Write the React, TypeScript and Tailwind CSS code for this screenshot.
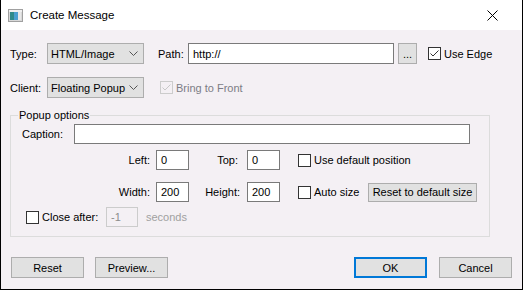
import React from "react";

const font = { fontFamily: '"Liberation Sans", Arial, sans-serif' };

function Check({ checked, disabled }: { checked?: boolean; disabled?: boolean }) {
  return (
    <div
      className={
        "w-[13px] h-[13px] border flex items-center justify-center shrink-0 " +
        (disabled ? "border-[#cccccc] bg-[#f4f0f4]" : "border-[#333333] bg-white")
      }
    >
      {checked && (
        <svg width="11" height="11" viewBox="0 0 11 11">
          <path d="M1.5 5.5 L4 8 L9.5 2.5" fill="none" stroke={disabled ? "#c8c8c8" : "#333333"} strokeWidth="1" />
        </svg>
      )}
    </div>
  );
}

function Select({ value }: { value: string }) {
  return (
    <div className="w-[97px] h-[21px] bg-[#e1e1e1] border border-[#adadad] flex items-center justify-between pl-[3px] pr-[5px] shrink-0">
      <span>{value}</span>
      <svg width="9" height="6" viewBox="0 0 9 6">
        <path d="M0.5 0.5 L4.5 4.5 L8.5 0.5" fill="none" stroke="#555555" strokeWidth="1" />
      </svg>
    </div>
  );
}

function Input({ w, value, disabled }: { w: string; value?: string; disabled?: boolean }) {
  return (
    <div
      className={
        "h-[20px] border flex items-center pl-[4px] shrink-0 " +
        w +
        (disabled ? " border-[#cccccc] bg-[#f4f0f4] text-[#8c8c8c]" : " border-[#7a7a7a] bg-white")
      }
    >
      {value}
    </div>
  );
}

function Button({ label, primary, className = "" }: { label: string; primary?: boolean; className?: string }) {
  return (
    <div
      className={
        "w-[73px] h-[21px] bg-[#e1e1e1] flex items-center justify-center shrink-0 " +
        (primary ? "border-2 border-[#0078d7]" : "border border-[#adadad]") +
        " " +
        className
      }
    >
      {label}
    </div>
  );
}

export default function App() {
  return (
    <div
      className="w-[523px] h-[290px] flex flex-col border-l border-r border-b border-black text-[11px] leading-[14px] whitespace-nowrap text-black bg-[#f4f0f4] overflow-hidden"
      style={font}
    >
      {/* Title bar */}
      <div className="h-[30px] bg-white flex items-center shrink-0">
        <div className="ml-[7px] w-[15px] h-[13px]">
          <svg width="15" height="13" viewBox="0 0 15 13">
            <rect x="0.5" y="0.5" width="14" height="12" fill="#d8d8d8" stroke="#a0a0a0" />
            <rect x="2" y="3" width="4" height="8" fill="#2f8a8a" />
            <rect x="6" y="3" width="4" height="8" fill="#4a9fd0" />
            <rect x="10" y="3" width="3" height="8" fill="#e8e8e8" />
            <rect x="1" y="1" width="13" height="2" fill="#f0f0f0" />
          </svg>
        </div>
        <span className="ml-[7px] text-[11.5px]">Create Message</span>
        <div className="ml-auto mr-[24px]">
          <svg width="11" height="11" viewBox="0 0 11 11">
            <path d="M0.5 0.5 L10.5 10.5 M10.5 0.5 L0.5 10.5" stroke="#000" strokeWidth="1" />
          </svg>
        </div>
      </div>

      {/* Body */}
      <div className="flex flex-col pl-[9px]">
        {/* Row 1 */}
        <div className="flex items-center mt-[13px] h-[21px]">
          <span className="w-[37px]">Type:</span>
          <Select value="HTML/Image" />
          <span className="ml-[14px] w-[30px]">Path:</span>
          <Input w="w-[206px] h-[21px]" value="http://" />
          <div className="ml-[4px] w-[19px] h-[21px] bg-[#e1e1e1] border border-[#adadad] flex items-end justify-center pb-[3px] text-[11px] leading-none shrink-0">
            ...
          </div>
          <div className="ml-[11px] flex items-center">
            <Check checked />
            <span className="ml-[3px]">Use Edge</span>
          </div>
        </div>

        {/* Row 2 */}
        <div className="flex items-center mt-[13px] h-[21px]">
          <span className="w-[37px]">Client:</span>
          <Select value="Floating Popup" />
          <div className="ml-[16px] flex items-center">
            <Check checked disabled />
            <span className="ml-[3px] text-[#7c7c85]">Bring to Front</span>
          </div>
        </div>

        {/* Group box */}
        <div className="relative mt-[17px] w-[480px] h-[122px] border border-[#dcdcdc] flex flex-col pl-[11px]">
          <span className="absolute left-[7px] top-[-8px] px-[1px] bg-[#f4f0f4] leading-[14px]">Popup options</span>
          <div className="flex items-center mt-[8px]">
            <span className="w-[52px]">Caption:</span>
            <Input w="w-[396px]" />
          </div>
          <div className="flex items-center mt-[6px]">
            <span className="w-[134px] text-right pr-[6px]">Left:</span>
            <Input w="w-[33px]" value="0" />
            <span className="w-[58px] text-right pr-[9px]">Top:</span>
            <Input w="w-[33px]" value="0" />
            <div className="ml-[18px] flex items-center">
              <Check />
              <span className="ml-[3px]">Use default position</span>
            </div>
          </div>
          <div className="flex items-center mt-[12px]">
            <span className="w-[134px] text-right pr-[6px]">Width:</span>
            <Input w="w-[33px]" value="200" />
            <span className="w-[58px] text-right pr-[7px]">Height:</span>
            <Input w="w-[33px]" value="200" />
            <div className="ml-[18px] flex items-center w-[70px]">
              <Check />
              <span className="ml-[3px]">Auto size</span>
            </div>
            <div className="w-[109px] h-[19px] bg-[#e1e1e1] border border-[#adadad] flex items-center justify-center shrink-0">
              Reset to default size
            </div>
          </div>
          <div className="flex items-center mt-[5px] pl-[4px]">
            <Check />
            <span className="ml-[3px] w-[64px]">Close after:</span>
            <Input w="w-[32px]" value="-1" disabled />
            <span className="ml-[8px] text-[#a0a0a0]">seconds</span>
          </div>
        </div>

        {/* Buttons */}
        <div className="flex items-center mt-[20px] pl-[1px]">
          <Button label="Reset" />
          <Button label="Preview..." className="ml-[11px]" />
          <Button label="OK" primary className="ml-auto" />
          <Button label="Cancel" className="ml-[12px] mr-[10px]" />
        </div>
      </div>
    </div>
  );
}
